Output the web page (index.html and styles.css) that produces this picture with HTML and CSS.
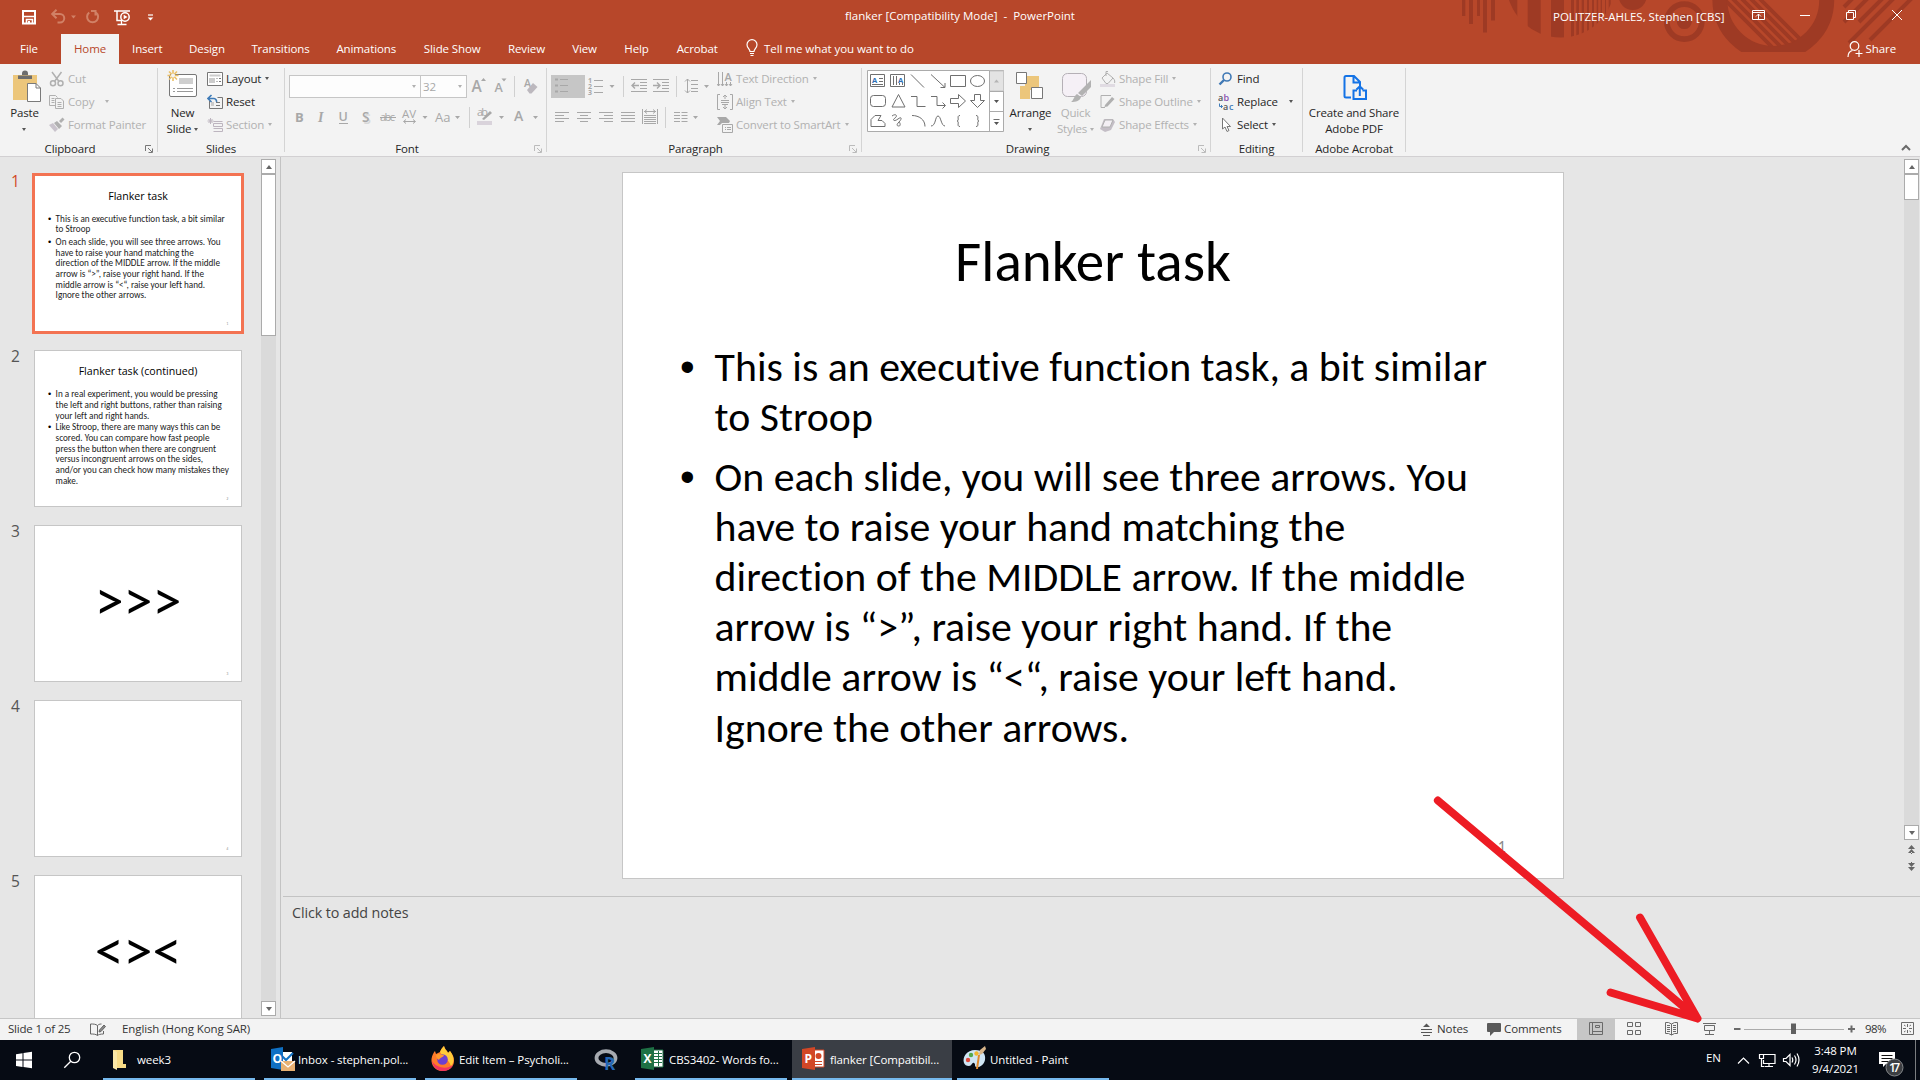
FILE: index.html
```
<!DOCTYPE html>
<html lang="en">
<head>
<meta charset="utf-8">
<title>flanker [Compatibility Mode] - PowerPoint</title>
<link rel="stylesheet" href="styles.css">
</head>
<body>
<div class="screen">

<header class="top">
  <svg class="decor" width="470" height="64" viewBox="1450 0 470 64">
    <defs>
      <clipPath id="c1"><circle cx="1560.7" cy="-16.7" r="54.3"/></clipPath>
      <clipPath id="c2"><circle cx="1773.3" cy="0" r="46.7"/></clipPath>
      <clipPath id="c3"><rect x="1550" y="0" width="370" height="52"/></clipPath>
    </defs>
    <g fill="#9e3a24">
      <path d="M1462 0h3.3v16h-3.3zM1469 0h4v24h-4zM1477 0h3v16h-3zM1483 0h4v32.500h-4zM1491 0h4v20.600h-4z"/>
      <path clip-path="url(#c1)" d="M1500 0h17.300v40h-17.300zM1527.700 0h13v40h-13zM1551 0h13v40h-13zM1571 0h3v40h-3zM1576.300 0h2.700v40h-2.700zM1581.700 0h2.300v40h-2.300zM1587 0h2v40h-2zM1592 0h2v40h-2zM1596.700 0h1.500v40h-1.500zM1600.700 0h1.300v40h-1.300zM1605 0h1v40h-1zM1608.700 0h2v40h-2z"/>
      <circle cx="1632.700" cy="-4" r="14"/>
      <circle cx="1684.300" cy="21.600" r="7.500"/>
    </g>
    <circle cx="1684.300" cy="21.600" r="17.500" fill="none" stroke="#9e3a24" stroke-width="5.600"/>
    <g clip-path="url(#c3)"><circle cx="1773.300" cy="0" r="53.400" fill="none" stroke="#9e3a24" stroke-width="15"/></g>
    <g stroke="#9e3a24" stroke-width="3.800" clip-path="url(#c2)"><path d="M1723-2l55 55M1732-2l55 55M1741-2l55 55M1750-2l55 55M1759-2l55 55"/></g>
    <path d="M1844 7l10-10M1844 22l24-24M1859 22l26-26M1849 43l47-47M1870 40l42-42" stroke="#9e3a24" stroke-width="4"/>
  </svg>
  <div class="titlebar">
    <svg class="qat" width="160" height="34" viewBox="0 0 160 34" fill="none" stroke="#fff">
      <path d="M23 11h12v12.500h-12z" stroke-width="2"/><path d="M24 16.500h10M26.500 23.500v-4h6v4" stroke-width="1.600"/><path d="M28 21h2v3h-2z" fill="#fff" stroke="none"/>
      <g stroke="#d18166" stroke-width="2"><path d="M52.500 14h7.500a4 4 0 0 1 0 8.500h-2.500M56.500 9.800l-4.300 4.200 4.300 4.200"/><path d="M89.200 12.500a5.500 5.500 0 1 0 6.800 0M91 11h4.500v4.500"/></g>
      <path d="M71 15.500h5l-2.500 3z" fill="#d18166" stroke="none"/>
      <path d="M114 11h16M117 11v9.500h5" stroke-width="1.500"/><circle cx="125" cy="17" r="4.200" stroke-width="1.500"/><path d="M123.700 14.700l3.800 2.300-3.800 2.300z" fill="#fff" stroke="none"/><path d="M121.500 21v3M117.500 24.500h9" stroke-width="1.300"/>
      <path d="M148 15h5" stroke-width="1.200"/><path d="M147.700 17.500h5.600l-2.800 3z" fill="#fff" stroke="none"/>
    </svg>
    <div class="doc-title">flanker [Compatibility Mode]&nbsp; - &nbsp;PowerPoint</div>
    <div class="user">POLITZER-AHLES, Stephen [CBS]</div>
    <svg width="180" height="34" viewBox="1740 0 180 34" fill="none" stroke="#fff" stroke-width="1">
      <path d="M1752.500 10.500h12v9h-12zM1752 12.500h13M1758.500 19v-5M1756 16.500l2.500-2.500 2.500 2.500M1800 15.500h10M1846.500 12.500h7v7h-7zM1848.500 12v-1.500h7v7h-1.500M1892 10l10 10M1902 10l-10 10"/>
    </svg>
  </div>
  <nav class="tabs">
    <span class="file">File</span><span class="on">Home</span><span>Insert</span><span>Design</span><span>Transitions</span><span>Animations</span><span>Slide Show</span><span>Review</span><span>View</span><span>Help</span><span>Acrobat</span>
    <div class="tell"><svg width="12" height="18" viewBox="0 0 12 18" fill="none" stroke="#fff" stroke-width="1.200"><path d="M4 12.500c0-2.500-3-3.500-3-6.800a5 5 0 0 1 10 0c0 3.300-3 4.300-3 6.800zM4 14.500h4M4.500 16.500h3"/></svg><b>Tell me what you want to do</b></div>
    <div class="share"><svg width="16" height="17" viewBox="0 0 16 17" fill="none" stroke="#fff" stroke-width="1.200"><circle cx="7.500" cy="5" r="4.300"/><path d="M1 16c0-3.500 2-6 4.500-6.500M8.500 12.500h7M12 9v7"/></svg>Share</div>
  </nav>
</header>

<section class="ribbon">
  <div class="group g-clip">
    <div class="body">
      <div class="big w50"><svg width="50" height="40" viewBox="0 64 50 40"><path d="M13 75h24v25h-24z" fill="#ecc67b"/><path d="M18 75.500h14v3.500h-14zM22 75v-1.500a3 3 0 0 1 6 0V75z" fill="#6d6d6d"/><path d="M27.500 83.500h8.500l4.500 4.500v13.500h-13z" fill="#fff" stroke="#7a7a7a"/><path d="M36 83.500v4.500h4.500" fill="none" stroke="#7a7a7a"/></svg><span>Paste</span><span class="drop"><i class="dd dk"></i></span></div>
      <div class="rows off">
        <div><svg width="16" height="16" fill="none" stroke="#b0b0b0" stroke-width="1.500"><path d="M3 1l7 9.500M12.500 1l-7 9.500"/><circle cx="4" cy="12.300" r="2.500"/><circle cx="11.500" cy="12.300" r="2.500"/></svg>Cut</div>
        <div><svg width="16" height="16" fill="none" stroke="#b0b0b0"><path d="M7 11.500h-6.500v-10h6l2 2M2.500 4.500h3M2.500 6.500h3M2.500 8.500h3M6.500 4.500h5.500l2.500 2.500v7.500h-8zM8.500 8.500h4M8.500 10.500h4M8.500 12.500h4"/></svg>Copy <i class="dd sp"></i></div>
        <div><svg width="16" height="16" fill="#b0b0b0"><path d="M0 8l4-2 5 6-3 3z" fill="#c9c3cc"/><path d="M5 6l3-2 5 5-3 3zM10 4l3.500-3.500 2 2-3.500 3.500z"/></svg>Format Painter</div>
      </div>
    </div>
    <div class="name"><span>Clipboard</span><svg class="launch" width="8" height="8" fill="none" stroke="#777"><path d="M.5 6V.5H6M3 3l4 4M7.500 3.500v4h-4"/></svg></div>
  </div>
  <div class="group g-slides">
    <div class="body">
      <div class="big w49"><svg width="49" height="40" viewBox="158 64 49 40"><rect x="169.500" y="74.500" width="27" height="22" rx="1.500" fill="#fff" stroke="#777"/><path d="M179 78h14v6h-14z" fill="#cfcfcf"/><path d="M173 88.500h2M177 88.500h16M173 91.500h2M177 91.500h16" stroke="#999"/><path d="M173 70v11M167.500 75.500h11M169 71.500l8 8M177 71.500l-8 8" stroke="#ecc067" stroke-width="1.600"/><circle cx="173" cy="75.500" r="2" fill="#f3f3f3"/></svg><span>New</span><span>Slide<i class="dd dk"></i></span></div>
      <div class="rows">
        <div><svg width="16" height="16" fill="none" stroke="#777"><path d="M.5 1.500h15v13h-15z" fill="#fff"/><path d="M2.500 3.500h11v2h-11z" fill="#ccc" stroke="none"/><path d="M2 7h6v5h-6z" fill="#ccc" stroke="none"/><path d="M9.500 7.500h1M12 7.500h2M9.500 10.500h1M12 10.500h2" /></svg>Layout <i class="dd dk"></i></div>
        <div><svg width="16" height="16" fill="none" stroke="#777"><path d="M2.500 7v7.500h13v-11h-5M9 8.500h4M9 11.500h4"/><path d="M4 8h3v4H4z" fill="#ccc" stroke="none"/><path d="M1 4.500h6a3 3 0 0 1 2.500 3.500M4.500 1L1 4.500 4.500 8" stroke="#3f7bb8" stroke-width="1.600"/></svg>Reset</div>
        <div class="off"><svg width="16" height="16" fill="none" stroke="#bdb5bf"><path d="M6.500 4.500h9M6.500 6.500h9v3h-9zM6.500 11.500h9v3h-9M3.500 1v6M.5 4h6M1.500 2l4 4M5.500 2l-4 4"/></svg>Section <i class="dd"></i></div>
      </div>
    </div>
    <div class="name"><span>Slides</span></div>
  </div>
  <div class="group g-font">
    <div class="body stack">
      <div class="fontrow"><div class="box fam"><i class="dd"></i></div><div class="box size">32<i class="dd"></i></div>
        <svg width="77" height="24" viewBox="468 75 77 24" class="glyph"><text x="472.500" y="92" font-size="15.500">A</text><path d="M482 81h5l-2.500-3zM502.500 78.500h5l-2.500 3z"/><text x="495.500" y="92" font-size="12.500">A</text><path d="M515 76h1v21h-1z" fill="#d0d0d0"/><text x="525" y="86.500" font-size="10.500">A</text><path d="M528 90l6-7 4.500 4-6 6.500h-2z" fill="#bcb8be"/></svg></div>
      <svg width="261" height="32" viewBox="285 101 261 32" class="glyph">
        <text x="295" y="122" font-size="13" font-weight="700">B</text><text x="318" y="122" font-size="14" font-style="italic" font-weight="700" class="it">I</text><text x="338.500" y="121" font-size="12.500">U</text><path d="M339 123h9v1h-9z"/><text x="363.500" y="123.500" font-size="13.500" fill="#d8d8d8">S</text><text x="362" y="122" font-size="13.500">S</text><text x="380" y="121" font-size="11" font-weight="400" textLength="15">abc</text><path d="M380 117h16v1h-16z"/><text x="402" y="118" font-size="11.500" font-weight="400" textLength="14">AV</text><path d="M404 121.500h11M406 119.500l-2.500 2 2.500 2M413 119.500l2.500 2-2.500 2" fill="none" stroke="#a8a8a8"/><text x="435" y="121.500" font-size="13" font-weight="400">Aa</text><path d="M469 107h1v21h-1z" fill="#d0d0d0"/><text x="477" y="116" font-size="11" font-weight="400" textLength="11">ab</text><path d="M482 119l8-8 2 2-8 7z"/><path d="M477 121h15v4h-15z" fill="#d9d3db"/><text x="514" y="121" font-size="14">A</text><path d="M422.500 116h5l-2.500 3zM455 116h5l-2.500 3zM499 116h5l-2.500 3zM533 116h5l-2.500 3z"/>
      </svg>
    </div>
    <div class="name"><span>Font</span><svg class="launch" width="8" height="8" fill="none" stroke="#bbb"><path d="M.5 6V.5H6M3 3l4 4M7.500 3.500v4h-4"/></svg></div>
  </div>
  <div class="group g-para">
    <div class="body">
      <svg width="170" height="72" viewBox="547 64 170 72" fill="none" stroke="#a8a8a8">
        <path d="M551 75h34v23h-34z" fill="#c6c6c6" stroke="none"/>
        <path d="M560 79.500h8M560 85.500h8M560 91.500h8"/><path d="M555 78.500h3v2h-3zM555 84.500h3v2h-3zM555 90.500h3v2h-3z" fill="#a8a8a8" stroke="none"/>
        <path d="M594 80.500h9M594 86.500h9M594 92.500h9"/><g font-size="7" font-weight="700" fill="#a8a8a8" stroke="none"><text x="588" y="82.500">1</text><text x="588" y="88.500">2</text><text x="588" y="94.500">3</text></g>
        <path d="M623.500 76v21M676.500 76v21M665.500 107v21" stroke="#d0d0d0"/>
        <path d="M631 79.500h16M640 82.500h7M640 85.500h7M640 88.500h7M631 91.500h16M653 79.500h16M662 82.500h7M662 85.500h7M662 88.500h7M653 91.500h16"/><path d="M639 85.500h-7M635 82.500l-3 3 3 3M653 85.500h7M657 82.500l3 3-3 3" stroke-width="1.400"/>
        <path d="M691 80.500h7M691 84.500h7M691 88.500h7M691 91.500h7M687.500 79v14M685 81.500l2.500-2.500 2.500 2.500M685 90.500l2.500 2.500 2.500-2.500"/>
        <path d="M555 112.500h14M555 115.500h9M555 118.500h14M555 121.500h9M577 112.500h14M580 115.500h8M577 118.500h14M580 121.500h8M599 112.500h14M604 115.500h9M599 118.500h14M604 121.500h9M621 112.500h14M621 115.500h14M621 118.500h14M621 121.500h14"/>
        <path d="M642.500 109v15M657.500 109v15M644 111.500h12M647 109.500l-2.500 2 2.500 2M653 109.500l2.500 2-2.500 2M644 115.500h12M644 117.500h12M644 119.500h12M644 121.500h12M644 123.500h12M674 112.500h6M674 115.500h6M674 118.500h6M674 121.500h6M681.500 112.500h6M681.500 115.500h6M681.500 118.500h6M681.500 121.500h6"/>
        <path d="M609.500 85h5l-2.500 3zM704 85h5l-2.500 3zM693 116h5l-2.500 3z" fill="#a8a8a8" stroke="none"/>
      </svg>
      <div class="rows off">
        <div><svg width="16" height="18" fill="none" stroke="#a8a8a8"><path d="M1.500 2v14M5.500 2v14M9.500 12v4M13.500 12v4M0 14l1.500 2 1.500-2M4 14l1.500 2 1.500-2M8 14l1.500 2 1.500-2M12 14l1.500 2 1.500-2"/><text x="7.500" y="11" font-size="11" font-weight="600" fill="#a8a8a8" stroke="none">A</text></svg>Text Direction <i class="dd"></i></div>
        <div><svg width="16" height="16" fill="none" stroke="#a8a8a8"><path d="M3 .5H.5v15H3M13 .5h2.500v15H13M8 1v4M6 3l2-2 2 2M8 11v4M6 13l2 2 2-2M4 6.500h8M4 8.500h8M5 10.500h6"/></svg>Align Text <i class="dd"></i></div>
        <div><svg width="16" height="16" fill="none" stroke="#a8a8a8"><path d="M0 0h9l4 4-1 2H5L3 8H0l3-4z" fill="#a8a8a8" stroke="none"/><path d="M5.500 7.500h10v8h-10zM8 10.500h1M10 10.500h4M8 12.500h1M10 12.500h4"/></svg>Convert to SmartArt <i class="dd"></i></div>
      </div>
    </div>
    <div class="name"><span>Paragraph</span><svg class="launch" width="8" height="8" fill="none" stroke="#bbb"><path d="M.5 6V.5H6M3 3l4 4M7.500 3.500v4h-4"/></svg></div>
  </div>
  <div class="group g-draw">
    <div class="body">
      <svg width="146" height="72" viewBox="862 64 146 72" fill="none" stroke="#6f6f6f">
        <path d="M867.500 70.500h136v61h-136z" fill="#fff" stroke="#ababab"/><path d="M989.500 71h14v20h-14z" fill="#e3e3e3" stroke="#c6c6c6"/><path d="M989.500 71v60M989.500 91.500h14M989.500 111.500h14" stroke="#ababab"/>
        <path d="M994 82.500h5l-2.500-3z" fill="#b5b5b5" stroke="none"/><path d="M994 100h5l-2.500 3zM994 122h5l-2.500 3z" fill="#555" stroke="none"/><path d="M993.500 119.500h6"/>
        <path d="M870.500 74.500h14v12h-14zM879 78.500h4M879 81.500h4M872 84.500h11M890.500 74.500h14v12h-14zM893.500 76v9M896.500 76v9M899.500 83v2M902.500 83v2"/><g font-size="7.500" font-weight="700" fill="#2f6db5" stroke="none"><text x="872" y="82.500">A</text><text x="898" y="82.500">A</text></g>
        <path d="M911 74.500l13 13M931 74.500l14 13M945 83v4.500h-4.500M950.500 75.500h15v11h-15z"/><ellipse cx="977.500" cy="81" rx="7" ry="5.500"/>
        <rect x="870.500" y="95.500" width="15" height="11" rx="3"/><path d="M898.500 94.500l6.500 12.500h-13zM911 96.500h6v10h8.500M931 96.500h6v9h8M942.500 102.500l3 3-3 3M950.500 98.500h8v-4l7 6.500-7 6.500v-4h-8zM974.500 94.500h6v6h4l-7 7-7-7h4z"/>
        <path d="M871 126.500v-7l4-4h6l-3 5h4l3 3v3zM892 116c4-3 6 0 3 2s-1 4 3 1 4 0 1 3-2 4 0 4 1-4 0-4M912 115.500c7 0 13 4 13 11M931 126c5 0 4-10 7-10s3 10 7 10M960 115.500c-4 0 0 5-3 5.500 3 .5-1 5.500 3 5.500M976 115.500c4 0 0 5 3 5.500-3 .5 1 5.500-3 5.500"/>
      </svg>
      <div class="big w45"><svg width="45" height="40" viewBox="1008 64 45 40"><path d="M1025 76h14v14h-9v9h-10V86h5z" fill="#ecc67b"/><path d="M1016.500 72.500h10v11h-10zM1031.500 87.500h11v11h-11z" fill="#fff" stroke="#777"/></svg><span>Arrange</span><span class="drop"><i class="dd dk"></i></span></div>
      <div class="big w45 off"><svg width="45" height="40" viewBox="1053 64 45 40"><rect x="1062.500" y="73.500" width="24" height="23" rx="5" fill="#f5f0f6" stroke="#b5b0b6"/><path d="M1091 80v7l-9 9-4-3zM1077 94l4 3c-1 4-5 5-10 5 3-2 3-6 6-8z" fill="#b2b2b2"/></svg><span>Quick</span><span>Styles<i class="dd"></i></span></div>
      <div class="rows off r2">
        <div><svg width="16" height="16" fill="none" stroke="#b0b0b0"><path d="M2 7l5-5 6 5-5 5.500H6zM6 5V.500h2M13 7c2 2 2 4 1.500 5"/><path d="M0 13h15v3H0z" fill="#e0dbe2" stroke="none"/></svg>Shape Fill <i class="dd"></i></div>
        <div><svg width="16" height="16" fill="none" stroke="#b0b0b0"><path d="M11 1.500H1v12h4"/><path d="M5 11l7-8 2.500 2-7 7.500-3 .5z" fill="#b0b0b0" stroke="none"/></svg>Shape Outline <i class="dd"></i></div>
        <div><svg width="16" height="16"><path d="M4 2h9l2 3-4 8-6 2-5-3z" fill="#c4bec6"/><path d="M5 3h8l-3 7H2z" fill="#f3eff4" stroke="#b0b0b0"/></svg>Shape Effects <i class="dd"></i></div>
      </div>
    </div>
    <div class="name"><span>Drawing</span><svg class="launch" width="8" height="8" fill="none" stroke="#bbb"><path d="M.5 6V.5H6M3 3l4 4M7.500 3.500v4h-4"/></svg></div>
  </div>
  <div class="group g-edit">
    <div class="body">
      <div class="rows">
        <div><svg width="16" height="16" fill="none" stroke="#4079b5"><circle cx="9" cy="6" r="4" stroke-width="1.600"/><path d="M6 9l-4.500 4.500" stroke-width="2.400"/></svg>Find</div>
        <div><svg width="17" height="18" font-weight="600" font-size="9"><text x="0" y="8" fill="#555">a</text><text x="5.500" y="8" fill="#8850b0">b</text><text x="5" y="16.500" fill="#555">a</text><text x="11" y="16.500" fill="#3f7bb8">c</text><path d="M1.500 10.500v3h3M3 12l1.500 1.500L3 15" fill="none" stroke="#3f7bb8"/></svg><span class="rep">Replace</span> <i class="dd dk sp"></i></div>
        <div><svg width="16" height="16" fill="#fff" stroke="#777"><path d="M4.500 1v11l2.500-2 2 4.500 2-1-2-4h3.500z"/></svg>Select<i class="dd dk"></i></div>
      </div>
    </div>
    <div class="name"><span>Editing</span></div>
  </div>
  <div class="group g-acro">
    <div class="body">
      <div class="big w102"><svg width="102" height="40" viewBox="1303 64 102 40" fill="none" stroke="#1473e6" stroke-width="2"><path d="M1351 97.500h-5a1.500 1.500 0 0 1-1.500-1.500V77.500a1.500 1.500 0 0 1 1.500-1.500h8l6 6v4M1353.500 76v6.500h6.500M1357 90.500h-3.500V99h12.500v-8.500h-3.500M1359.800 96v-9M1356.500 89.500l3.300-3.200 3.300 3.200"/></svg><span>Create and Share</span><span>Adobe PDF</span></div>
    </div>
    <div class="name"><span>Adobe Acrobat</span></div>
  </div>
  <svg class="collapse" width="10" height="8" fill="none" stroke="#6a6a6a" stroke-width="2"><path d="M1 6l4-4 4 4"/></svg>
</section>

<main class="work">
  <aside class="thumbs">
    <ol class="list">
      <li class="sel"><span class="no">1</span><div class="slide mini"><h2>Flanker task</h2><ul><li>This is an executive function task, a bit similar<br>to Stroop</li><li>On each slide, you will see three arrows. You<br>have to raise your hand matching the<br>direction of the MIDDLE arrow. If the middle<br>arrow is “&gt;”, raise your right hand. If the<br>middle arrow is “&lt;“, raise your left hand.<br>Ignore the other arrows.</li></ul><em>1</em></div></li>
      <li><span class="no">2</span><div class="slide mini tight"><h2>Flanker task (continued)</h2><ul><li>In a real experiment, you would be pressing<br>the left and right buttons, rather than raising<br>your left and right hands.</li><li>Like Stroop, there are many ways this can be<br>scored. You can compare how fast people<br>press the button when there are congruent<br>versus incongruent arrows on the sides,<br>and/or you can check how many mistakes they<br>make.</li></ul><em>2</em></div></li>
      <li><span class="no">3</span><div class="slide mini"><p>&gt;&gt;&gt;</p><em>3</em></div></li>
      <li><span class="no">4</span><div class="slide mini"><em>4</em></div></li>
      <li><span class="no">5</span><div class="slide mini"><p>&lt;&gt;&lt;</p></div></li>
    </ol>
    <div class="vbar left"><span class="btn"><i class="up"></i></span><span class="grip"></span><span class="btn end"><i class="dn"></i></span></div>
  </aside>
  <div class="center">
    <div class="stage">
      <div class="canvas"><div class="slide main"><h2>Flanker task</h2><ul><li>This is an executive function task, a bit similar<br>to Stroop</li><li>On each slide, you will see three arrows. You<br>have to raise your hand matching the<br>direction of the MIDDLE arrow. If the middle<br>arrow is “&gt;”, raise your right hand. If the<br>middle arrow is “&lt;“, raise your left hand.<br>Ignore the other arrows.</li></ul><em>1</em></div></div>
      <div class="side">
        <div class="vbar right"><span class="btn"><i class="up"></i></span><span class="grip"></span><span class="btn end"><i class="dn"></i></span></div>
        <svg width="15" height="40" viewBox="0 0 15 40" fill="#666"><path d="M4 9h7l-3.500-4zM4 13h7l-3.500-4zM7 12h1v2h-1zM4 23h7l-3.500 4zM4 27h7l-3.500 4zM7 22h1v2h-1z"/></svg>
      </div>
    </div>
    <div class="notes">Click to add notes</div>
  </div>
</main>

<footer class="status">
  <span class="s-slide">Slide 1 of 25</span>
  <svg width="16" height="14" fill="none" stroke="#666"><path d="M7.500 12.500c-2-1.500-4-1.500-7-1.500v-10c3 0 5 0 7 1.500zM7.500 2.500c1-1 2-1.500 4-1.500M7.500 12.500c1-1 3-1.500 6-1.500v-3"/><path d="M9 9l.5-2L14 2l1.500 1.500L11 8.500z" fill="#888"/></svg>
  <span class="s-lang">English (Hong Kong SAR)</span>
  <svg width="12" height="13" fill="none" stroke="#555"><path d="M0 6.500h11M0 9.500h11M2 12.500h7"/><path d="M2 4h7L5.500.5z" fill="#555" stroke="none"/></svg>
  <span class="s-notes">Notes</span>
  <svg width="14" height="14" fill="#5a5a5a"><path d="M1 0h12a1 1 0 0 1 1 1v7a1 1 0 0 1-1 1H7l-4 4V9H1a1 1 0 0 1-1-1V1a1 1 0 0 1 1-1z"/></svg>
  <span class="s-comm">Comments</span>
  <svg class="views" width="343" height="21" viewBox="1577 1019 343 21" fill="none" stroke="#6a6a6a">
    <path d="M1577 1019h38v21h-38z" fill="#c6c6c6" stroke="none"/>
    <path d="M1589.500 1022.500h13v12h-13zM1592.500 1023v11M1593 1031.500h9M1595.500 1025.500h4v2h-4z"/>
    <path d="M1627.500 1022.500h5v4h-5zM1635.500 1022.500h5v4h-5zM1627.500 1030.500h5v4h-5zM1635.500 1030.500h5v4h-5z"/>
    <path d="M1671.500 1024v11M1665.500 1022.500h3l3 1.500 3-1.500h3v11h-3l-3 1.500-3-1.500h-3zM1667 1025.500h3M1667 1027.500h3M1667 1029.500h3M1667 1031.500h3M1673 1025.500h3M1673 1027.500h3M1673 1029.500h3M1673 1031.500h3"/>
    <path d="M1703 1023.500h13M1704.500 1025.500h10v5h-10zM1709.500 1031v3M1705 1034.500h9"/>
    <path d="M1734 1029h6.500M1848 1029h7M1851.500 1025.500v7" stroke-width="2"/><path d="M1744 1029.500h100" stroke="#ababab"/><path d="M1791 1023.500h5v10.500h-5z" fill="#5f5f5f" stroke="none"/>
    <text x="1865" y="1033" textLength="21.500" fill="#333" stroke="none">98%</text>
    <path d="M1901.500 1022.500h12v12h-12zM1907.500 1024v3M1907.500 1030v3M1903 1028.500h3M1909 1028.500h3M1904 1025l1.500 1M1911 1025l-1.500 1M1904 1032l1.500-1M1911 1032l-1.500-1"/>
  </svg>
</footer>

<div class="taskbar">
  <svg width="103" height="40" viewBox="0 1040 103 40"><path d="M16 1054.200l6.500-1v6.300h-6.500zM23.500 1053l8.500-1.200v7.700h-8.500zM16 1060.500h6.500v6.500l-6.500-1zM23.500 1060.500h8.500v7.800l-8.500-1.300z" fill="#fff"/><g fill="none" stroke="#fff" stroke-width="1.300"><circle cx="74.500" cy="1057.500" r="5.200"/><path d="M70.800 1061.300l-6.500 6.500"/></g></svg>
  <div class="task"><svg width="26" height="26" viewBox="0 0 26 26"><path d="M2 4h7v18H2z" fill="#e8c35f"/><path d="M3 4h9v14h3v4H4z" fill="#f8dc86"/><path d="M2 4l4 2v18l-4-2z" fill="#fbe8a6"/></svg><span>week3</span></div>
  <div class="task t2"><svg width="26" height="26" viewBox="0 0 26 26"><path d="M11 6h11v11H11z" fill="#fff"/><path d="M12 10l4 4 7-7" fill="none" stroke="#1272c4" stroke-width="2"/><path d="M1 3l12-2v23L1 22z" fill="#0f70c4"/><text x="2.500" y="17" font-size="12" font-weight="700" fill="#fff">O</text><path d="M11 15h14v10H11z" fill="#e8b172"/><path d="M11 15l7 6 7-6" fill="none" stroke="#fff" stroke-width="1.300"/></svg><span>Inbox - stephen.pol...</span></div>
  <div class="task t3"><svg width="26" height="26" viewBox="0 0 26 26"><path d="M12.500 25C5 25 1 19 1.500 13 2 9 4 6 5 5l1 3 4-2c1-3 3-5 4-6 1 4 3 4 4 7l2-2c3 4 4 6 4 10 0 6-5 10-11.500 10z" fill="#ff7a2a"/><path d="M14 0c1 4 3 4 4 7l2-2c4 5 5 11 1 15-3-8-8-9-11-14 1-3 3-5 4-6z" fill="#ffcb3a"/><path d="M2 15c1 6 5 10 11 10 4 0 8-2 10-6-5 4-16 4-21-4z" fill="#f0355f"/><circle cx="12.500" cy="13.500" r="5.300" fill="#6d3fd0"/><path d="M6 9c3-2 5 0 8 0-1 3-4 2-5 5-2-1-3-3-3-5z" fill="#ff9a2c"/></svg><span>Edit Item – Psycholi...</span></div>
  <svg class="rlogo" width="26" height="26" viewBox="0 0 26 26"><ellipse cx="12" cy="11" rx="9.500" ry="6.800" fill="none" stroke="#a6aab0" stroke-width="3.800"/><text x="10" y="22.500" font-size="17" font-weight="700" fill="#2467b5">R</text></svg>
  <div class="task t4"><svg width="26" height="26" viewBox="0 0 26 26"><path d="M13 4h10v17H13z" fill="#fff" stroke="#1e7145"/><path d="M14 7.500h8M14 10.500h8M14 13.500h8M14 16.500h8M18.500 5v15" stroke="#1e7145"/><path d="M1 3l13-2v23L1 22z" fill="#1e7145"/><text x="3.500" y="17" font-size="12" font-weight="700" fill="#fff">X</text></svg><span>CBS3402- Words fo...</span></div>
  <div class="task t5 active"><svg width="26" height="26" viewBox="0 0 26 26"><path d="M13 4h10v17H13z" fill="#fff" stroke="#d24726"/><circle cx="17.500" cy="10" r="3" fill="#d24726"/><path d="M14 15.500h7M14 18.500h7" stroke="#d24726"/><path d="M1 3l13-2v23L1 22z" fill="#d24726"/><text x="3.500" y="17" font-size="12" font-weight="700" fill="#fff">P</text></svg><span>flanker [Compatibil...</span></div>
  <div class="task t6"><svg width="26" height="26" viewBox="0 0 26 26"><path d="M2 17c-2-6 3-13 11-13s11 4 10 10c-1 5-6 8-9 7-2-1 0-3-2-4s-2 3-5 3-4-1-5-3z" fill="#cfe5f4"/><circle cx="6" cy="14" r="2.200" fill="#dd4a3c"/><circle cx="9" cy="9" r="2.200" fill="#54a94c"/><circle cx="14.500" cy="7.500" r="2.200" fill="#f1b52e"/><path d="M14 23l2-14h2l-2 14z" fill="#e08a2e"/><path d="M17 9l1-5 5-4 1 3-4 5z" fill="#d8b58a"/></svg><span>Untitled - Paint</span></div>
  <div class="tray">
    <span class="en">EN</span>
    <svg width="70" height="40" viewBox="1735 1040 70 40" fill="none" stroke="#fff" stroke-width="1.200"><path d="M1738 1063.500l5.500-5.500 5.500 5.500M1763 1054.500h12v9h-12M1763.500 1060v4M1769 1064v3M1765 1066.500h8M1759.500 1054.500h4v4h-4zM1761.500 1058.500v8h3M1783.500 1058.500h2.500l4-4v11l-4-4h-2.500zM1792 1057.500q1.500 2.500 0 5M1794.500 1055.500q3 4.500 0 9M1797 1053.500q4 6.500 0 13"/></svg>
    <div class="clock"><span>3:48 PM</span><span>9/4/2021</span></div>
    <svg width="45" height="40" viewBox="1875 1040 45 40"><path d="M1879 1052h16v12h-9l-3 3v-3h-4z" fill="#fff"/><path d="M1881.500 1055.500h11M1881.500 1058.500h11M1881.500 1061.500h8" stroke="#111"/><circle cx="1894.500" cy="1067.500" r="8.500" fill="#3b3e42" stroke="#85888b"/><text x="1889" y="1071.500" font-size="12" fill="#fff" textLength="11" font-weight="600">17</text><path d="M1915.500 1040v40" stroke="#7a7d80"/></svg>
  </div>
</div>

<svg class="arrow" width="280" height="240" viewBox="1430 790 280 240" fill="none" stroke="#ed1c24" stroke-width="7.800" stroke-linecap="round" stroke-linejoin="round"><path d="M1437.800 800.500L1697.500 1018.500M1640 917.500L1697.500 1018.500L1610.500 992.500"/></svg>
</div>
</body>
</html>
```
FILE: styles.css
```
*{box-sizing:border-box}
body{margin:0;background:#e6e6e6;font:11.500px/16px "Open Sans",sans-serif;letter-spacing:-.1px;color:#262626}
.screen{width:1920px;height:1080px;display:flex;flex-direction:column;position:relative;overflow:hidden}
svg{display:block;flex:none}
svg text{font-family:"Open Sans",sans-serif;letter-spacing:0}
svg text.it{font-family:"Liberation Serif",serif}
i,em{font-style:normal}

/* title bar and tabs */
.top{height:64px;background:#b7472a;color:#fff;position:relative}
.decor{position:absolute;right:0;top:0}
.titlebar{height:34px;display:flex;align-items:center;position:relative;justify-content:flex-end}
.qat{margin-right:auto}
.doc-title{position:absolute;left:0;right:0;top:8px;text-align:center;letter-spacing:0}
.user{width:187px;line-height:16px;letter-spacing:0;white-space:nowrap}
.tabs{height:30px;display:grid;grid-template-columns:61px 58px 56.5px 63px 84px 87.5px 84.5px 64px 52px 52px 69.500px 1fr auto;line-height:30px;text-align:center;position:relative}
.tabs .file{padding-right:3px}
.tabs .on{background:#f3f3f3;color:#b7472a}
.tell{display:flex;gap:6px;padding-left:14px}
.tell svg{margin-top:5px}
.tell b{font-weight:400;letter-spacing:-.05px}
.share{display:flex;gap:3px;padding-right:24px}
.share svg{margin-top:7px}

/* ribbon */
.ribbon{height:93px;background:#f3f3f3;border-bottom:1px solid #d2d0d2;display:flex;flex:none;position:relative;white-space:nowrap;letter-spacing:-.15px}
.group{display:flex;flex-direction:column;position:relative}
.group::after{content:"";position:absolute;right:-1px;top:4px;width:1px;height:84px;background:#d4d4d4}
.g-clip{width:157px}
.g-slides{width:126px;margin-left:1px}
.g-font{width:261px;margin-left:1px}
.g-para{width:314px;margin-left:1px}
.g-draw{width:348px;margin-left:1px}
.g-edit{width:91px;margin-left:1px}
.g-acro{width:102px;margin-left:1px}
.body{height:76px;display:flex}
.stack{flex-direction:column}
.name{height:16px;display:flex;text-align:center;line-height:17px}
.name span{flex:1}
.launch{margin:5px 4px 0 5px}
.big{display:flex;flex-direction:column;text-align:center}
.big span{line-height:16px}
.big svg + span{line-height:17px}
.big .drop{padding-right:4px}
.w50{width:49px}
.w49{width:49px}
.w45{width:45px}
.w102{width:102px}
.rows{padding-top:3px}
.rows div{height:23px;display:flex;align-items:center;gap:3px}
.rows.r2{padding-left:2px}
.rep{margin-left:-1px}
.g-edit .rows{padding-left:7px}
.off{color:#b1b1b1}
.dd{display:inline-block;width:0;height:0;border:2.5px solid transparent;border-top:3px solid #b1b1b1;border-bottom:0;margin-left:1px;vertical-align:middle}
.dd.dk{border-top-color:#555}
.big .dd{margin-left:3px}
.dd.sp{margin-left:8px}
.fontrow{display:flex;padding:11px 0 0 4px;height:37px}
.box{height:23px;background:#fdfdfd;border:1px solid #c6c6c6;display:flex;align-items:center;color:#a8a8a8}
.box .dd{margin-left:auto;margin-right:4px}
.fam{width:132px}
.size{width:47px;margin-left:-1px;padding-left:2px}
.glyph{fill:#a8a8a8;font-weight:600}
.collapse{position:absolute;left:1901px;top:80px}

/* slide panes */
.work{flex:1;display:flex;min-height:0;background:#e6e6e6}
.thumbs{width:281px;display:flex;border-right:1px solid #c3c3c3;padding-top:2px}
.list{list-style:none;margin:0;padding:16px 0 0;width:261px;display:flex;flex-direction:column;gap:18px;overflow:hidden}
.list>li{display:flex;flex:none;height:157px}
.no{width:34px;padding-left:11px;font-size:15.500px;line-height:12px;color:#555}
.sel .no{color:#d24726}
.slide{background:#fff;border:1px solid #c6c6c6;color:#000;font-family:Calibri,Carlito,sans-serif;letter-spacing:0;line-height:1.2;font-variant-ligatures:none;position:relative;white-space:nowrap}
.slide h2{margin:0;padding-top:.960em;font-weight:400;font-size:1.364em;line-height:1.2;text-align:center;color:#000}
.slide ul{margin:0;padding:1.100em 0 0 2.190em;list-style:none}
.slide ul li{position:relative;margin-bottom:.22em}
.slide ul li::before{content:"•";position:absolute;left:-.83em;font-family:"Liberation Sans",sans-serif;color:#000}
.slide em{position:absolute;font-size:.375em;right:3.65em;bottom:1.35em;color:#898989}
.slide p{margin:0;padding-top:.69em;text-align:center;font-size:58px;line-height:1.2;color:#000}
.main{width:942px;height:707px;font-size:41.820px}
.mini{width:208px;height:157px;font-size:9.160px;color:#222}
.sel .slide{outline:3px solid #f37352;outline-offset:-1px}
.mini h2{font-family:"Open Sans",sans-serif;font-size:10.650px;line-height:15px;padding-top:12.500px}
.mini ul{line-height:1.16;padding:1.130em 0 0 2.250em}
.mini em{font-size:3.500px}
.mini.tight ul{line-height:1.17;padding-top:1.170em}
.mini.tight ul li{margin-bottom:.1em}
.vbar{width:15px;background:#dadada;display:flex;flex-direction:column}
.vbar span{background:#fff;border:1px solid #ababab}
.btn{height:15px;display:flex;align-items:center;justify-content:center}
.end{margin-top:auto}
.left{margin-bottom:2px}
.left .grip{height:162px}
.up,.dn{border:3.5px solid transparent;border-bottom:4px solid #666;border-top:0}
.dn{border-bottom:0;border-top:4px solid #666}
.center{flex:1;display:flex;flex-direction:column;padding-left:2px}
.stage{height:739px;display:flex}
.canvas{flex:1;padding:15px 0 0 339px}
.side{width:16px;padding-top:2px;display:flex;flex-direction:column}
.right{height:681px}
.right .grip{height:26px}
.notes{flex:1;border-top:1px solid #c3c3c3;padding:7px 9px;font-size:14.300px;line-height:17px;color:#444}

/* status bar */
.status{height:22px;border-top:1px solid #c6c6c6;background:#f3f3f3;display:flex;align-items:center;flex:none;padding-left:8px;color:#333;white-space:nowrap}
.status span{padding-bottom:1px}
.s-slide{width:82px;letter-spacing:-.2px}
.s-lang{width:1315px;padding-left:16px}
.s-notes{width:54px;padding-left:4px}
.s-comm{width:76px;padding-left:3px}

/* taskbar */
.taskbar{height:40px;background:#060b14;display:flex;flex:none;color:#fff;white-space:nowrap}
.task{width:152px;height:40px;border-bottom:2px solid #76b9ed;display:flex;align-items:center;padding-left:8px;margin-right:9px}
.task span{padding-top:2px}
.t2{padding-left:6px}
.t2 span{padding-left:2px}
.t3{padding-left:5px;margin-right:17px}
.t3 span{padding-left:3px}
.rlogo{margin:7px 15px 0 0}
.t4{padding-left:5px;margin-right:5px}
.t4 span,.t5 span{padding-left:3px}
.t6 span{padding-left:2px}
.t5{width:160px;padding-left:9px;margin-right:5px}
.t6{padding-left:5px}
.active{background:#3a3e45}
.tray{margin-left:auto;display:flex;align-items:center}
.en{width:29px;padding-bottom:4px}
.clock{width:70px;display:flex;flex-direction:column;text-align:center;padding-right:9px;line-height:18px}
.arrow{position:absolute;left:1430px;top:790px}
```
